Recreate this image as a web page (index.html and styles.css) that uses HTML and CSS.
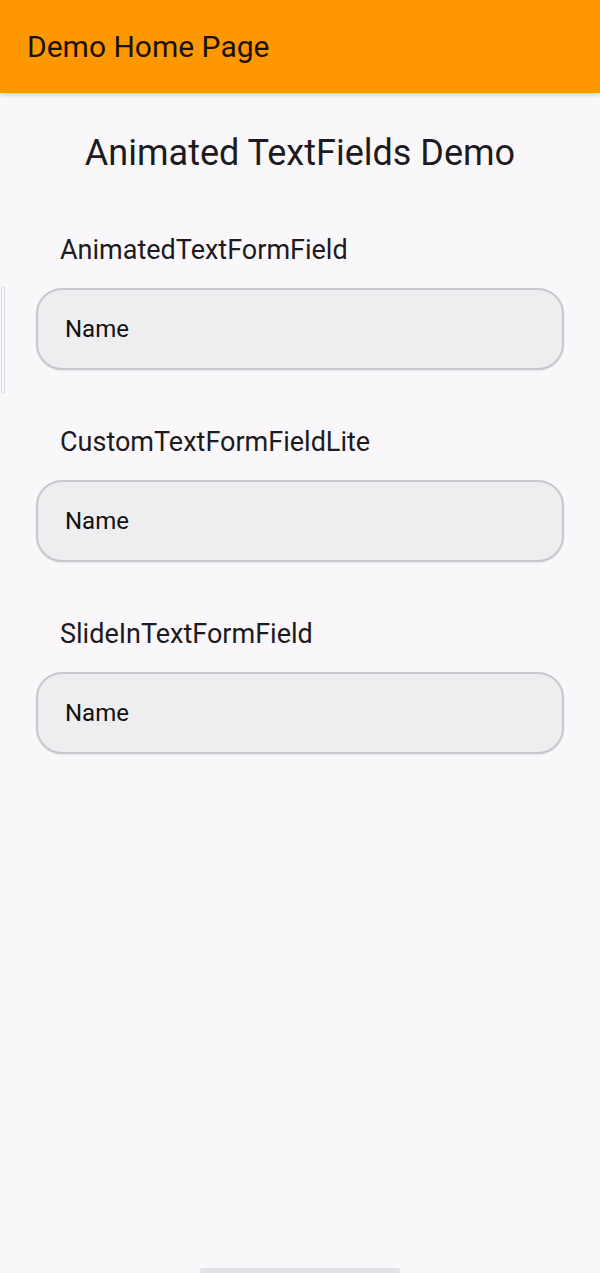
FILE: index.html
```html
<!DOCTYPE html>
<html>
<head>
<meta charset="utf-8">
<link rel="stylesheet" href="styles.css">
</head>
<body>
<header class="appbar"><h1 class="appbar-title">Demo Home Page</h1></header>
<div class="scroll-hint"></div>
<main class="content">
  <h2 class="headline">Animated TextFields Demo</h2>
  <section class="field-group">
    <div class="field-label">AnimatedTextFormField</div>
    <div class="field"><span class="field-hint">Name</span></div>
  </section>
  <section class="field-group">
    <div class="field-label">CustomTextFormFieldLite</div>
    <div class="field"><span class="field-hint">Name</span></div>
  </section>
  <section class="field-group">
    <div class="field-label">SlideInTextFormField</div>
    <div class="field"><span class="field-hint">Name</span></div>
  </section>
</main>
<div class="home-indicator"></div>
</body>
</html>
```
FILE: styles.css
```css
html, body {
  margin: 0;
  padding: 0;
}
body {
  width: 600px;
  height: 1273px;
  background: #f9f7fa;
  font-family: Roboto, "Noto Sans", sans-serif;
  color: #1d1b20;
  position: relative;
  overflow: hidden;
}
.appbar {
  height: 93px;
  background: #ff9800;
  display: flex;
  align-items: center;
  padding-left: 27px;
  box-shadow: 0 2px 4px rgba(0,0,0,0.18);
  position: relative;
  z-index: 1;
}
.appbar-title {
  margin: 0;
  font-size: 30px;
  font-weight: 400;
  color: #1a1208;
  padding-bottom: 1px;
}
.content {
  display: flex;
  flex-direction: column;
  padding: 0 36px;
}
.headline {
  margin: 0;
  margin-top: 38px;
  text-align: center;
  font-size: 36px;
  font-weight: 400;
  line-height: 44px;
  color: #1d1b20;
}
.field-group {
  display: flex;
  flex-direction: column;
  margin-top: 59px;
}
.field-group + .field-group {
  margin-top: 56px;
}
.field-label {
  padding-left: 24px;
  font-size: 27px;
  line-height: 32px;
  color: #1d1b20;
  margin-bottom: 22px;
}
.field {
  height: 78px;
  border: 2px solid #cac8cc;
  border-radius: 26px;
  background: #eeedf0;
  display: flex;
  align-items: center;
  padding-left: 27px;
  box-shadow: 0 1px 2px rgba(0,0,0,0.08);
}
.field-hint {
  font-size: 24px;
  color: #111111;
  padding-bottom: 1px;
}
.scroll-hint {
  position: absolute;
  left: 1px;
  top: 286px;
  width: 4px;
  height: 108px;
  border: 1px solid #dedde1;
  border-radius: 3px;
  box-sizing: border-box;
}
.home-indicator {
  position: absolute;
  left: 200px;
  bottom: 0;
  width: 200px;
  height: 5px;
  border-radius: 3px 3px 0 0;
  background: #e3e1e6;
}
```
